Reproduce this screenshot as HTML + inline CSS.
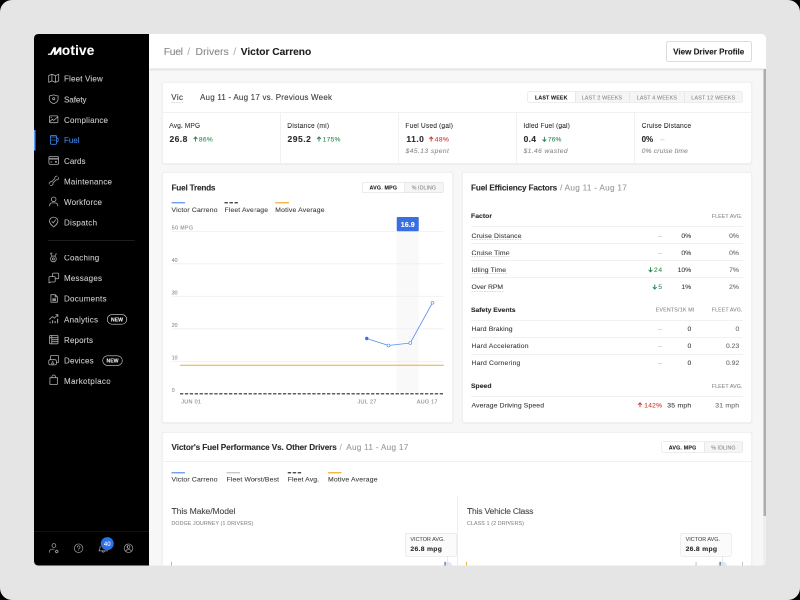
<!DOCTYPE html>
<html><head><meta charset="utf-8"><title>Motive - Fuel</title>
<style>
html,body{margin:0;padding:0;overflow:hidden;background:#000;}
#root{position:absolute;left:0;top:0;transform:scale(.5);transform-origin:0 0;overflow:hidden;will-change:transform;font-family:"Liberation Sans",sans-serif;}
#root{width:1600px;height:1200px;}
.bg{position:absolute;left:0px;top:0px;width:1600px;height:1200px;background:#e5e5e5;border-radius:24px;}
.t{position:absolute;white-space:pre;line-height:1;font-family:"Liberation Sans",sans-serif;-webkit-text-stroke:0.2px currentColor;}
.abs{position:absolute;}
.side{position:absolute;left:68px;top:68px;width:229.5px;height:1063px;background:#000;border-radius:8px 0px 0px 8px;}
.main{position:absolute;left:297.5px;top:68px;width:1234px;height:1063px;background:#f7f7f7;border-radius:0px 8px 8px 0px;overflow:hidden;}
.hdr{position:absolute;left:297.5px;top:68px;width:1234px;height:69px;background:#fff;border-radius:0px 8px 0px 0px;box-shadow:0px 2px 4px rgba(0,0,0,.14);}
.card{position:absolute;background:#fff;border:1px solid #e3e3e3;border-radius:6px;box-shadow:0px 1px 3px rgba(0,0,0,.07);box-sizing:border-box;}
.hl{position:absolute;height:1px;background:#e4e4e4;}
.vl{position:absolute;width:1px;background:#e4e4e4;}
.tog{position:absolute;box-sizing:border-box;border:1px solid #dcdcdc;border-radius:3px;background:#f5f5f5;overflow:hidden;}
.tog i{position:absolute;top:0px;bottom:0px;background:#fff;}
.tog b{position:absolute;top:0px;bottom:0px;width:1px;background:#dcdcdc;}
.dot{position:absolute;height:0px;border-bottom:1.5px dashed #b2b2b2;}
svg{position:absolute;overflow:visible;}
.clip{position:absolute;left:68px;top:68px;width:1463.5px;height:1063px;border-radius:8px;overflow:hidden;}
.in{position:absolute;left:-68px;top:-68px;width:1600px;height:1200px;}

</style></head>
<body>
<div id="root">
<div class="bg"></div>
<div class="clip"><div class="in">
<div class="main"></div>
<div class="side"></div>
<div class="hdr"></div>
<!-- sidebar graphics -->
<div class="abs" style="left:68px;top:260px;width:3px;height:41px;background:#5b9cf6;"></div>
<div class="abs" style="left:96px;top:480.5px;width:173px;height:1px;background:#3a3a3a;"></div>
<div class="abs" style="left:68px;top:1062px;width:229.5px;height:1px;background:#262626;"></div>
<svg style="left:0px;top:0px;width:1600px;height:1200px" viewBox="0 0 800 600" fill="none" stroke-linecap="round" stroke-linejoin="round">
  <!-- logo M -->
  <g fill="#fff" stroke="none">
    <path d="M47.9 54.9 V53.6 H50.1 L53.7 47.3 H55.9 V54.9 H53.9 V50.9 L51.7 54.9 Z"/>
    <path d="M55.9 52.1 L59.2 47.3 H61.4 V54.9 H59.4 V50.9 L56.6 54.9 H55.9 Z"/>
  </g>
  <g stroke="#adadad" stroke-width="0.8">
    <!-- map -->
    <path d="M48.7 75.6 V82.4 L51.9 80.9 L55.5 82.4 L58.7 80.9 V74.2 L55.5 75.7 L51.9 74.2 Z M51.9 74.2 V80.9 M55.5 75.7 V82.4"/>
    <!-- shield -->
    <path d="M53.7 94.8 C55.2 95.6 56.6 95.9 58.1 95.9 V99 C58.1 101.4 56 102.9 53.7 103.7 C51.4 102.9 49.3 101.4 49.3 99 V95.9 C50.8 95.9 52.2 95.6 53.7 94.8 Z"/>
    <circle cx="53.7" cy="98.7" r="1.1"/>
    <!-- compliance -->
    <rect x="49.4" y="115.9" width="8.5" height="6.8" rx="1.1"/>
    <path d="M49.8 121.6 L52.4 119.2 L53.7 120.5 L57.4 117.1 M51 117.6 h0.6" />
    <!-- cards -->
    <rect x="48.9" y="156.4" width="9.7" height="8" rx="1.4"/>
    <path d="M50.6 162 H52"/>
    <!-- maintenance wrench -->
    <circle cx="51.1" cy="183.6" r="1.9"/>
    <circle cx="56.7" cy="178" r="1.9"/>
    <path d="M52.4 182.3 L55.4 179.3" stroke-width="2.6" stroke-linecap="butt"/>
    <path d="M51.8 182.9 L56 178.7" stroke="#000" stroke-width="1.1" stroke-linecap="butt"/>
    <path d="M51.1 183.6 L49.2 185.5 M56.7 178 L58.6 176.1" stroke="#000" stroke-width="1.4" stroke-linecap="butt"/>
    <!-- workforce -->
    <circle cx="53.7" cy="199.3" r="2.3"/>
    <path d="M49.6 206 v-0.5 a2.6 2.6 0 0 1 2.6 -2.6 h3 a2.6 2.6 0 0 1 2.6 2.6 v0.5"/>
    <!-- dispatch -->
    <path d="M53.7 227 C51 224.6 49.5 223.2 49.5 221.3 a4.2 4.2 0 0 1 8.4 0 C57.9 223.2 56.4 224.6 53.7 227 Z"/>
    <path d="M51.9 221.5 L53.2 222.9 L55.6 219.9"/>
    <!-- coaching -->
    <circle cx="53.4" cy="258.9" r="2.9"/>
    <circle cx="53.4" cy="258.9" r="1.0"/>
    <path d="M50.6 253.2 L52.1 256.2 M56.2 253.6 L54.8 256.2 M50.6 253.2 h1.4"/>
    <!-- messages -->
    <path d="M52.6 276.3 V273.9 a0.8 0.8 0 0 1 0.8 -0.8 h4.5 a0.8 0.8 0 0 1 0.8 0.8 v4 a0.8 0.8 0 0 1 -0.8 0.8 H55.6"/>
    <path d="M49.8 276.6 h4.6 a0.8 0.8 0 0 1 0.8 0.8 v3.8 a0.8 0.8 0 0 1 -0.8 0.8 h-3.9 l-1.5 1 v-5.6 a0.8 0.8 0 0 1 0.8 -0.8 z"/>
    <!-- documents -->
    <path d="M50.9 294.7 h4.3 l2.2 2.2 v5.3 h-6.5 z M55.2 294.7 v2.2 h2.2"/>
    <!-- analytics -->
    <path d="M50.1 323.2 v-1.4 M52.6 323.2 v-3 M55.1 323.2 v-2.2 M57.6 323.2 v-4.6" stroke-linecap="butt" stroke-width="1"/>
    <path d="M49.6 319.3 L52.5 316.6 L54.4 318.1 L57.8 314.8 M55.8 314.6 h2.1 v2.1"/>
    <!-- reports -->
    <rect x="49.5" y="335.4" width="8.5" height="8.4" rx="1.1"/>
    <path d="M51.8 335.4 V343.8 M49.5 337.7 H58 M51.8 339.7 H58 M51.8 341.7 H58"/>
    <!-- devices -->
    <path d="M50.6 359.4 V356.4 a0.9 0.9 0 0 1 0.9 -0.9 h6.2 a0.9 0.9 0 0 1 0.9 0.9 v5.2 a0.9 0.9 0 0 1 -0.9 0.9 H56.6"/>
    <rect x="48.8" y="359.7" width="7.6" height="5.2" rx="1.5"/>
    <path d="M51.4 363.9 L52.6 361.3 L53.8 363.9 Z" stroke-width="0.6"/>
    <!-- marketplace -->
    <path d="M49.9 377.7 h7.6 v6 a0.9 0.9 0 0 1 -0.9 0.9 h-5.8 a0.9 0.9 0 0 1 -0.9 -0.9 z M51.9 377.7 v-0.9 a1.8 1.8 0 0 1 3.6 0 v0.9"/>
  </g>
  <!-- filled bits -->
  <rect x="48.9" y="157.9" width="9.7" height="1.7" fill="#8a8a8a"/>
  <rect x="55.2" y="161.1" width="1.5" height="1.5" fill="#d8d8d8"/>
  <rect x="52.3" y="298.3" width="3.7" height="2.7" fill="#8f8f8f"/>
  <!-- fuel (active) -->
  <g stroke="#3b82ec" stroke-width="0.85">
    <rect x="50.4" y="135.4" width="6.1" height="8.9" rx="1.1"/>
    <path d="M50.4 137 H56.5 M51.6 140 H53 M54 140 H55.2 M56.5 137.7 L58.2 138.5 V140.4 Q58.2 141.5 57 141.7"/>
  </g>
  <!-- NEW pills -->
  <rect x="107.2" y="314.6" width="19.6" height="9.6" rx="4.8" stroke="#d9d9d9" stroke-width="0.6"/>
  <rect x="102.7" y="355.8" width="19.6" height="9.6" rx="4.8" stroke="#d9d9d9" stroke-width="0.6"/>
  <!-- bottom bar icons -->
  <g stroke="#a6a6a6" stroke-width="0.7">
    <circle cx="53.9" cy="545.5" r="1.9"/>
    <path d="M49.3 552.4 v-0.6 a2.6 2.6 0 0 1 2.6 -2.6 h2.2"/>
    <circle cx="56.7" cy="551.5" r="1.15"/>
    <path d="M56.7 549.7 v0.5 M56.7 552.8 v0.5 M54.9 551.5 h0.5 M58 551.5 h0.5 M55.45 550.25 l.35 .35 M57.6 552.4 l.35 .35 M57.95 550.25 l-.35 .35 M55.8 552.4 l-.35 .35" stroke-width="0.5"/>
    <circle cx="78.6" cy="548.25" r="4.3"/>
    <path d="M77.3 547.1 a1.35 1.35 0 1 1 1.9 1.3 c-0.5 0.3 -0.6 0.5 -0.6 1.0 M78.6 550.6 v0.1"/>
    <path d="M100.2 546.2 C100 549 99.6 550 98.9 550.9 H107.6 M102.3 551.2 a1 1 0 0 0 2 0"/>
    <circle cx="128.5" cy="548.25" r="4.3"/>
    <circle cx="128.5" cy="546.9" r="1.45"/>
    <path d="M125.6 551.3 a3.2 3.2 0 0 1 5.8 0"/>
  </g>
  <circle cx="107.25" cy="543.6" r="6.5" fill="#2f6fe6"/>
</svg>

<!-- scrollbar -->
<div class="abs" style="left:1526px;top:137px;width:5.5px;height:994px;background:#efefef;border-radius:0px 0px 8px 0px;"></div>
<div class="abs" style="left:1526.5px;top:137.5px;width:5px;height:894.5px;background:#adadad;"></div>

<!-- header button -->
<div class="abs" style="left:1332px;top:82px;width:172px;height:42px;box-sizing:border-box;border:2px solid #dcdcdc;border-radius:5px;background:#fff;"></div>

<!-- card 1 -->
<div class="card" style="left:324px;top:164px;width:1180px;height:164px;"></div>
<div class="hl" style="left:326px;top:224px;width:1176px;"></div>
<div class="vl" style="left:560px;top:226px;height:100px;"></div>
<div class="vl" style="left:796px;top:226px;height:100px;"></div>
<div class="vl" style="left:1032px;top:226px;height:100px;"></div>
<div class="vl" style="left:1268px;top:226px;height:100px;"></div>
<div class="dot" style="left:342px;top:204px;width:24px;"></div>
<div class="tog" style="left:1055px;top:183px;width:430px;height:22px;"><i style="left:0px;width:94px;"></i><b style="left:94px"></b><b style="left:203px"></b><b style="left:313px"></b></div>

<!-- card 2: Fuel Trends -->
<div class="card" style="left:324px;top:344px;width:582px;height:502px;"></div>
<div class="tog" style="left:723.5px;top:363.5px;width:163.5px;height:22.5px;"><i style="left:0;width:84px;"></i><b style="left:84px"></b></div>
<svg style="left:0px;top:0px;width:1600px;height:1200px" viewBox="0 0 800 600">
  <!-- legend -->
  <line x1="171.5" y1="202.75" x2="185" y2="202.75" stroke="#5a8ff0" stroke-width="1.2"/>
  <line x1="224.5" y1="202.75" x2="238.5" y2="202.75" stroke="#333" stroke-width="1.2" stroke-dasharray="3.4 1.6"/>
  <line x1="275.25" y1="202.75" x2="289" y2="202.75" stroke="#f0ab2e" stroke-width="1.2"/>
  <!-- highlight column -->
  <rect x="396.75" y="231" width="22" height="162.5" fill="#f9f9f9"/>
  <!-- grid -->
  <g stroke="#f0f0f0" stroke-width="0.8">
    <line x1="171.5" y1="231.4" x2="443.5" y2="231.4"/>
    <line x1="171.5" y1="263.8" x2="443.5" y2="263.8"/>
    <line x1="171.5" y1="296.3" x2="443.5" y2="296.3"/>
    <line x1="171.5" y1="328.8" x2="443.5" y2="328.8"/>
    <line x1="171.5" y1="361.3" x2="443.5" y2="361.3"/>
  </g>
  <rect x="396.75" y="217" width="22" height="14.3" rx="0.9" fill="#3a6fe2"/>
  <line x1="180" y1="365.3" x2="443.7" y2="365.3" stroke="#f0ab2e" stroke-width="1"/>
  <line x1="180" y1="393.8" x2="443.7" y2="393.8" stroke="#2b2b2b" stroke-width="1.1" stroke-dasharray="3.3 1.6"/>
  <polyline points="366.75,338.5 388.5,345.5 410.25,343 432.5,302.75" fill="none" stroke="#5a8ff0" stroke-width="0.8"/>
  <circle cx="366.75" cy="338.5" r="1.7" fill="#3a6fe2"/>
  <circle cx="388.5" cy="345.5" r="1.45" fill="#fff" stroke="#5a8ff0" stroke-width="0.7"/>
  <circle cx="410.25" cy="343" r="1.45" fill="#fff" stroke="#5a8ff0" stroke-width="0.7"/>
  <circle cx="432.5" cy="302.75" r="1.45" fill="#fff" stroke="#5a8ff0" stroke-width="0.7"/>
</svg>

<!-- card 3: Fuel Efficiency Factors -->
<div class="card" style="left:924px;top:344px;width:580px;height:502px;"></div>
<div class="hl" style="left:942px;top:452px;width:544px;"></div>
<div class="hl" style="left:942px;top:486px;width:544px;"></div>
<div class="hl" style="left:942px;top:520px;width:544px;"></div>
<div class="hl" style="left:942px;top:555px;width:544px;"></div>
<div class="hl" style="left:942px;top:640px;width:544px;"></div>
<div class="hl" style="left:942px;top:674px;width:544px;"></div>
<div class="hl" style="left:942px;top:708px;width:544px;"></div>
<div class="hl" style="left:942px;top:792px;width:544px;"></div>
<div class="dot" style="left:943px;top:478.5px;width:100px;"></div>
<div class="dot" style="left:943px;top:513px;width:76px;"></div>
<div class="dot" style="left:943px;top:547px;width:70px;"></div>
<div class="dot" style="left:943px;top:581.5px;width:64px;"></div>

<svg style="left:0px;top:0px;width:1600px;height:1200px" viewBox="0 0 800 600" fill="none" stroke-width="0.95" stroke-linecap="butt" stroke-linejoin="miter">
<path d="M195.5 141.5 V137.29999999999998 M193.6 139.0 L195.5 137.0 L197.4 139.0" stroke="#2a8550"/>
<path d="M319 141.5 V137.29999999999998 M317.1 139.0 L319 137.0 L320.9 139.0" stroke="#2a8550"/>
<path d="M431.2 141.5 V137.29999999999998 M429.3 139.0 L431.2 137.0 L433.09999999999997 139.0" stroke="#cf3a2f"/>
<path d="M544.4 136.9 V141.1 M542.5 139.4 L544.4 141.4 L546.3 139.4" stroke="#2a8550"/>
<path d="M650.5 267.3 V271.5 M648.6 269.8 L650.5 271.8 L652.4 269.8" stroke="#2a8550"/>
<path d="M654.75 284.55 V288.75 M652.85 287.05 L654.75 289.05 L656.65 287.05" stroke="#2a8550"/>
<path d="M640 407.29999999999995 V403.09999999999997 M638.1 404.79999999999995 L640 402.79999999999995 L641.9 404.79999999999995" stroke="#cf3a2f"/>
</svg>

<!-- card 4 -->
<div class="card" style="left:324px;top:864px;width:1180px;height:280px;border-radius:6px 6px 0 0;"></div>
<div class="hl" style="left:326px;top:923px;width:1176px;"></div>
<div class="tog" style="left:1322.5px;top:883px;width:163px;height:22px;"><i style="left:0;width:84px;"></i><b style="left:84px"></b></div>
<svg style="left:0px;top:0px;width:1600px;height:1200px" viewBox="0 0 800 600">
  <line x1="171.5" y1="472.75" x2="185" y2="472.75" stroke="#5a8ff0" stroke-width="1.2"/>
  <line x1="226.5" y1="472.75" x2="240" y2="472.75" stroke="#bdbdbd" stroke-width="1.2"/>
  <line x1="287.75" y1="472.75" x2="301.5" y2="472.75" stroke="#333" stroke-width="1.2" stroke-dasharray="3.4 1.6"/>
  <line x1="328" y1="472.75" x2="341.5" y2="472.75" stroke="#f0ab2e" stroke-width="1.2"/>
  <line x1="457.5" y1="496" x2="457.5" y2="566" stroke="#ededed" stroke-width="1"/>
</svg>
<svg style="left:0px;top:0px;width:1600px;height:1200px" viewBox="0 0 800 600">
  <circle cx="447.7" cy="566.3" r="4.6" fill="#dce9fb"/>
  <circle cx="722.6" cy="566.3" r="4.6" fill="#dce9fb"/>
  <line x1="447.75" y1="556" x2="447.75" y2="566" stroke="#d9d9d9" stroke-width="0.6"/>
  <line x1="722.75" y1="556" x2="722.75" y2="566" stroke="#d9d9d9" stroke-width="0.6"/>
  <rect x="171.1" y="561.8" width="0.9" height="5" fill="#f0ab2e"/>
  <rect x="466.1" y="561.8" width="0.9" height="5" fill="#f0ab2e"/>
  <rect x="444.6" y="561.8" width="1" height="5" fill="#4a5670"/>
  <rect x="719.6" y="561.8" width="1" height="5" fill="#4a5670"/>
  <rect x="695.7" y="561.8" width="0.7" height="5" fill="#a8a8a8"/>
  <rect x="742.2" y="561.8" width="0.7" height="5" fill="#a8a8a8"/>
</svg>
<div class="abs" style="left:810px;top:1065.5px;width:102.5px;height:47px;box-sizing:border-box;border:1px solid #dedede;border-radius:3px;background:#fbfbfb;"></div>
<div class="abs" style="left:1360.5px;top:1065.5px;width:102.5px;height:47px;box-sizing:border-box;border:1px solid #dedede;border-radius:3px;background:#fbfbfb;"></div>
<span class="t" style="top:93px;font-size:20.8px;color:#8a8a8a;letter-spacing:-0.66px;left:327.5px;">Fuel</span>
<span class="t" style="top:93px;font-size:20.8px;color:#b0b0b0;left:374.6px;">/</span>
<span class="t" style="top:93px;font-size:20.8px;color:#8a8a8a;letter-spacing:0.11px;left:391px;">Drivers</span>
<span class="t" style="top:93px;font-size:20.8px;color:#b0b0b0;left:466.6px;">/</span>
<span class="t" style="top:93px;font-size:20.4px;color:#222;font-weight:700;letter-spacing:-0.02px;left:481.5px;">Victor Carreno</span>
<span class="t" style="top:95px;font-size:16.2px;color:#222;font-weight:700;letter-spacing:-0.02px;left:1346.2px;">View Driver Profile</span>
<span class="t" style="top:187px;font-size:16px;color:#3d3d3d;letter-spacing:0.78px;left:342.5px;">Vic</span>
<span class="t" style="top:187px;font-size:16px;color:#3d3d3d;letter-spacing:0.43px;left:400px;">Aug 11 - Aug 17 vs. Previous Week</span>
<span class="t" style="top:244px;font-size:13.4px;color:#3d3d3d;letter-spacing:0.12px;left:338.6px;">Avg. MPG</span>
<span class="t" style="top:270px;font-size:17px;color:#2c2c2c;font-weight:700;letter-spacing:0.84px;left:339px;">26.8</span>
<span class="t" style="top:272px;font-size:13.2px;color:#2f8f57;letter-spacing:0.7px;left:397.8px;">86%</span>
<span class="t" style="top:244px;font-size:13.4px;color:#3d3d3d;letter-spacing:0.39px;left:574.6px;">Distance (mi)</span>
<span class="t" style="top:270px;font-size:17px;color:#2c2c2c;font-weight:700;letter-spacing:1.06px;left:575px;">295.2</span>
<span class="t" style="top:272px;font-size:13.2px;color:#2f8f57;letter-spacing:0.62px;left:645.2px;">175%</span>
<span class="t" style="top:244px;font-size:13.4px;color:#3d3d3d;letter-spacing:0.25px;left:810.8px;">Fuel Used (gal)</span>
<span class="t" style="top:270px;font-size:17px;color:#2c2c2c;font-weight:700;letter-spacing:0.95px;left:812.8px;">11.0</span>
<span class="t" style="top:272px;font-size:13.2px;color:#d23a2e;letter-spacing:1px;left:869.4px;">48%</span>
<span class="t" style="top:295px;font-size:13.2px;color:#8c8c8c;font-style:italic;letter-spacing:0.92px;left:811.2px;">$45.13 spent</span>
<span class="t" style="top:244px;font-size:13.4px;color:#3d3d3d;letter-spacing:0.24px;left:1046.8px;">Idled Fuel (gal)</span>
<span class="t" style="top:270px;font-size:17px;color:#2c2c2c;font-weight:700;letter-spacing:0.58px;left:1047.2px;">0.4</span>
<span class="t" style="top:272px;font-size:13.2px;color:#2f8f57;letter-spacing:0.3px;left:1095.8px;">76%</span>
<span class="t" style="top:295px;font-size:13.2px;color:#8c8c8c;font-style:italic;letter-spacing:0.85px;left:1047.2px;">$1.46 wasted</span>
<span class="t" style="top:244px;font-size:13.4px;color:#3d3d3d;letter-spacing:0.32px;left:1283.2px;">Cruise Distance</span>
<span class="t" style="top:271px;font-size:16px;color:#2c2c2c;font-weight:700;letter-spacing:-0.12px;left:1283.2px;">0%</span>
<span class="t" style="top:272px;font-size:13.2px;color:#bbb;left:1320.6px;">--</span>
<span class="t" style="top:295px;font-size:13.2px;color:#8c8c8c;font-style:italic;letter-spacing:0.42px;left:1283.6px;">0% cruise time</span>
<span class="t" style="top:190px;font-size:10.6px;color:#222;font-weight:700;letter-spacing:0.3px;left:1070px;">LAST WEEK</span>
<span class="t" style="top:190px;font-size:10.6px;color:#8c8c8c;letter-spacing:0.37px;left:1163.6px;">LAST 2 WEEKS</span>
<span class="t" style="top:190px;font-size:10.6px;color:#8c8c8c;letter-spacing:0.37px;left:1273.4px;">LAST 4 WEEKS</span>
<span class="t" style="top:190px;font-size:10.6px;color:#8c8c8c;letter-spacing:0.45px;left:1382.6px;">LAST 12 WEEKS</span>
<span class="t" style="top:367px;font-size:16.4px;color:#2c2c2c;font-weight:700;letter-spacing:-0.4px;left:343px;">Fuel Trends</span>
<span class="t" style="top:370px;font-size:10.6px;color:#222;font-weight:700;letter-spacing:0.4px;left:739px;">AVG. MPG</span>
<span class="t" style="top:370px;font-size:10.6px;color:#8c8c8c;letter-spacing:0.12px;left:823.5px;">% IDLING</span>
<span class="t" style="top:413px;font-size:13.6px;color:#3d3d3d;letter-spacing:0.35px;left:343px;">Victor Carreno</span>
<span class="t" style="top:413px;font-size:13.6px;color:#3d3d3d;letter-spacing:0.28px;left:449px;">Fleet Average</span>
<span class="t" style="top:413px;font-size:13.6px;color:#3d3d3d;letter-spacing:0.39px;left:550.5px;">Motive Average</span>
<span class="t" style="top:451px;font-size:10.4px;color:#8c8c8c;letter-spacing:0.88px;left:343.5px;">50 MPG</span>
<span class="t" style="top:516px;font-size:10.4px;color:#8c8c8c;left:343.5px;">40</span>
<span class="t" style="top:581px;font-size:10.4px;color:#8c8c8c;left:343.5px;">30</span>
<span class="t" style="top:646px;font-size:10.4px;color:#8c8c8c;left:343.5px;">20</span>
<span class="t" style="top:711px;font-size:10.4px;color:#8c8c8c;left:343.5px;">10</span>
<span class="t" style="top:776px;font-size:10.4px;color:#8c8c8c;left:343.5px;">0</span>
<span class="t" style="top:798px;font-size:11px;color:#8c8c8c;letter-spacing:0.56px;left:362.5px;">JUN 01</span>
<span class="t" style="top:798px;font-size:11px;color:#8c8c8c;letter-spacing:0.61px;left:715px;">JUL 27</span>
<span class="t" style="top:798px;font-size:11px;color:#8c8c8c;letter-spacing:0.47px;left:833.5px;">AUG 17</span>
<span class="t" style="top:442px;font-size:14.4px;color:#fff;font-weight:700;left:801.5px;">16.9</span>
<span class="t" style="top:367px;font-size:16.4px;color:#2c2c2c;font-weight:700;letter-spacing:-0.32px;left:942px;">Fuel Efficiency Factors</span>
<span class="t" style="top:367px;font-size:16.4px;color:#999;letter-spacing:0.56px;left:1120px;">/ Aug 11 - Aug 17</span>
<span class="t" style="top:425px;font-size:13.6px;color:#2c2c2c;font-weight:700;letter-spacing:0.09px;left:942px;">Factor</span>
<span class="t" style="top:427px;font-size:10.6px;color:#8c8c8c;letter-spacing:0.17px;left:1423.6px;">FLEET AVG.</span>
<span class="t" style="top:465px;font-size:13.6px;color:#3d3d3d;letter-spacing:0.29px;left:943px;">Cruise Distance</span>
<span class="t" style="top:465px;font-size:13.2px;color:#bbb;left:1315.2px;">--</span>
<span class="t" style="top:465px;font-size:13.6px;color:#3d3d3d;left:1362.74px;">0%</span>
<span class="t" style="top:465px;font-size:13.6px;color:#6e6e6e;left:1458.14px;">0%</span>
<span class="t" style="top:499px;font-size:13.6px;color:#3d3d3d;letter-spacing:0.35px;left:943px;">Cruise Time</span>
<span class="t" style="top:499px;font-size:13.2px;color:#bbb;left:1315.2px;">--</span>
<span class="t" style="top:499px;font-size:13.6px;color:#3d3d3d;left:1362.74px;">0%</span>
<span class="t" style="top:499px;font-size:13.6px;color:#6e6e6e;left:1458.14px;">0%</span>
<span class="t" style="top:533px;font-size:13.6px;color:#3d3d3d;letter-spacing:0.33px;left:943px;">Idling Time</span>
<span class="t" style="top:533px;font-size:13.2px;color:#2f8f57;letter-spacing:1.33px;left:1308px;">24</span>
<span class="t" style="top:533px;font-size:13.6px;color:#3d3d3d;left:1355.18px;">10%</span>
<span class="t" style="top:533px;font-size:13.6px;color:#6e6e6e;left:1458.14px;">7%</span>
<span class="t" style="top:567px;font-size:13.6px;color:#3d3d3d;letter-spacing:-0.06px;left:943px;">Over RPM</span>
<span class="t" style="top:567px;font-size:13.2px;color:#2f8f57;left:1316.66px;">5</span>
<span class="t" style="top:567px;font-size:13.6px;color:#3d3d3d;left:1362.74px;">1%</span>
<span class="t" style="top:567px;font-size:13.6px;color:#6e6e6e;left:1458.14px;">2%</span>
<span class="t" style="top:613px;font-size:13.6px;color:#2c2c2c;font-weight:700;letter-spacing:-0.01px;left:942px;">Safety Events</span>
<span class="t" style="top:614px;font-size:10.6px;color:#8c8c8c;letter-spacing:0.42px;left:1311.2px;">EVENTS/1K MI</span>
<span class="t" style="top:614px;font-size:10.6px;color:#8c8c8c;letter-spacing:0.17px;left:1423.6px;">FLEET AVG.</span>
<span class="t" style="top:651px;font-size:13.6px;color:#3d3d3d;letter-spacing:0.24px;left:943px;">Hard Braking</span>
<span class="t" style="top:651px;font-size:13.2px;color:#bbb;left:1315.2px;">--</span>
<span class="t" style="top:651px;font-size:13.6px;color:#3d3d3d;left:1374.94px;">0</span>
<span class="t" style="top:651px;font-size:13.6px;color:#6e6e6e;left:1470.94px;">0</span>
<span class="t" style="top:685px;font-size:13.6px;color:#3d3d3d;letter-spacing:0.42px;left:943px;">Hard Acceleration</span>
<span class="t" style="top:685px;font-size:13.2px;color:#bbb;left:1315.2px;">--</span>
<span class="t" style="top:685px;font-size:13.6px;color:#3d3d3d;left:1374.94px;">0</span>
<span class="t" style="top:685px;font-size:13.6px;color:#6e6e6e;left:1452.04px;">0.23</span>
<span class="t" style="top:719px;font-size:13.6px;color:#3d3d3d;letter-spacing:0.36px;left:943px;">Hard Cornering</span>
<span class="t" style="top:719px;font-size:13.2px;color:#bbb;left:1315.2px;">--</span>
<span class="t" style="top:719px;font-size:13.6px;color:#3d3d3d;left:1374.94px;">0</span>
<span class="t" style="top:719px;font-size:13.6px;color:#6e6e6e;left:1452.04px;">0.92</span>
<span class="t" style="top:765px;font-size:13.6px;color:#2c2c2c;font-weight:700;letter-spacing:0.05px;left:942px;">Speed</span>
<span class="t" style="top:767px;font-size:10.6px;color:#8c8c8c;letter-spacing:0.17px;left:1423.6px;">FLEET AVG.</span>
<span class="t" style="top:804px;font-size:13.6px;color:#3d3d3d;letter-spacing:0.27px;left:943px;">Average Driving Speed</span>
<span class="t" style="top:804px;font-size:13.2px;color:#d23a2e;letter-spacing:0.59px;left:1288.5px;">142%</span>
<span class="t" style="top:804px;font-size:13.6px;color:#3d3d3d;letter-spacing:0.53px;left:1334.4px;">35 mph</span>
<span class="t" style="top:804px;font-size:13.6px;color:#6e6e6e;letter-spacing:0.45px;left:1430.4px;">31 mph</span>
<span class="t" style="top:886px;font-size:16.4px;color:#2c2c2c;font-weight:700;letter-spacing:-0.24px;left:343px;">Victor&#x27;s Fuel Performance Vs. Other Drivers</span>
<span class="t" style="top:886px;font-size:16.4px;color:#aaa;left:679px;">/</span>
<span class="t" style="top:886px;font-size:16.4px;color:#999;letter-spacing:0.56px;left:692.4px;">Aug 11 - Aug 17</span>
<span class="t" style="top:890px;font-size:10.6px;color:#222;font-weight:700;letter-spacing:0.4px;left:1337.5px;">AVG. MPG</span>
<span class="t" style="top:890px;font-size:10.6px;color:#8c8c8c;letter-spacing:0.12px;left:1422.5px;">% IDLING</span>
<span class="t" style="top:952px;font-size:13.6px;color:#3d3d3d;letter-spacing:0.35px;left:343px;">Victor Carreno</span>
<span class="t" style="top:952px;font-size:13.6px;color:#3d3d3d;letter-spacing:0.32px;left:453px;">Fleet Worst/Best</span>
<span class="t" style="top:952px;font-size:13.6px;color:#3d3d3d;letter-spacing:0.26px;left:575.5px;">Fleet Avg.</span>
<span class="t" style="top:952px;font-size:13.6px;color:#3d3d3d;letter-spacing:0.43px;left:656px;">Motive Average</span>
<span class="t" style="top:1014px;font-size:17.2px;color:#4a4a4a;letter-spacing:-0.21px;left:343px;">This Make/Model</span>
<span class="t" style="top:1042px;font-size:10.4px;color:#8c8c8c;letter-spacing:0.35px;left:343px;">DODGE JOURNEY (1 DRIVERS)</span>
<span class="t" style="top:1014px;font-size:17.2px;color:#4a4a4a;letter-spacing:-0.44px;left:934px;">This Vehicle Class</span>
<span class="t" style="top:1042px;font-size:10.4px;color:#8c8c8c;letter-spacing:0.37px;left:934px;">CLASS 1 (2 DRIVERS)</span>
<span class="t" style="top:1073px;font-size:10.8px;color:#555;letter-spacing:0.07px;left:820.8px;">VICTOR AVG.</span>
<span class="t" style="top:1091px;font-size:13.6px;color:#2c2c2c;font-weight:700;letter-spacing:0.58px;left:820.8px;">26.8 mpg</span>
<span class="t" style="top:1073px;font-size:10.8px;color:#555;letter-spacing:0.08px;left:1371.2px;">VICTOR AVG.</span>
<span class="t" style="top:1091px;font-size:13.6px;color:#2c2c2c;font-weight:700;letter-spacing:0.58px;left:1371.2px;">26.8 mpg</span>
<span class="t" style="top:150px;font-size:16px;color:#c9c9c9;letter-spacing:0.34px;left:128px;">Fleet View</span>
<span class="t" style="top:192px;font-size:16px;color:#c9c9c9;letter-spacing:-0.07px;left:128px;">Safety</span>
<span class="t" style="top:233px;font-size:16px;color:#c9c9c9;letter-spacing:0.39px;left:128px;">Compliance</span>
<span class="t" style="top:273px;font-size:16px;color:#3f86ea;letter-spacing:-0.04px;left:128px;">Fuel</span>
<span class="t" style="top:315px;font-size:16px;color:#c9c9c9;letter-spacing:0.08px;left:128px;">Cards</span>
<span class="t" style="top:356px;font-size:16px;color:#c9c9c9;letter-spacing:0.44px;left:128px;">Maintenance</span>
<span class="t" style="top:397px;font-size:16px;color:#c9c9c9;letter-spacing:0.42px;left:128px;">Workforce</span>
<span class="t" style="top:438px;font-size:16px;color:#c9c9c9;letter-spacing:0.54px;left:128px;">Dispatch</span>
<span class="t" style="top:508px;font-size:16px;color:#c9c9c9;letter-spacing:0.41px;left:128px;">Coaching</span>
<span class="t" style="top:549px;font-size:16px;color:#c9c9c9;letter-spacing:0.44px;left:128px;">Messages</span>
<span class="t" style="top:590px;font-size:16px;color:#c9c9c9;letter-spacing:0.51px;left:128px;">Documents</span>
<span class="t" style="top:632px;font-size:16px;color:#c9c9c9;letter-spacing:0.5px;left:128px;">Analytics</span>
<span class="t" style="top:673px;font-size:16px;color:#c9c9c9;letter-spacing:0.33px;left:128px;">Reports</span>
<span class="t" style="top:714px;font-size:16px;color:#c9c9c9;letter-spacing:0.38px;left:128px;">Devices</span>
<span class="t" style="top:755px;font-size:16px;color:#c9c9c9;letter-spacing:0.62px;left:128px;">Marketplace</span>
<span class="t" style="top:635px;font-size:10.4px;color:#eee;font-weight:700;left:221.88px;">NEW</span>
<span class="t" style="top:717px;font-size:10.4px;color:#eee;font-weight:700;left:212.88px;">NEW</span>
<span class="t" style="top:1082px;font-size:12px;color:#fff;letter-spacing:0.04px;left:207.8px;">40</span>
<span class="t" style="top:88px;font-size:27px;color:#fff;font-weight:700;letter-spacing:0.44px;left:123.8px;">otive</span>
</div></div>

</div>
</body></html>
